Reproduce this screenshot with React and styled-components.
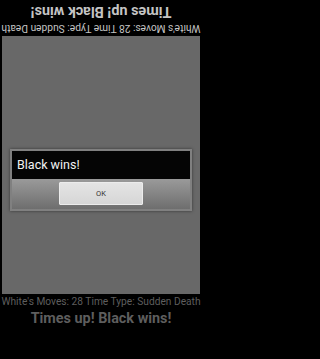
import styled, { createGlobalStyle } from 'styled-components';

const GlobalStyle = createGlobalStyle`
  html, body {
    margin: 0;
    padding: 0;
    background: #000;
    font-family: Roboto, 'Liberation Sans', sans-serif;
  }
`;

// Page layout

const Frame = styled.div`
  position: relative;
  width: 202px;
  height: 359px;
  overflow: hidden;
`;

const Screen = styled.div`
  display: flex;
  flex-direction: column;
  height: 100%;
  background: #000;
`;

const Status = styled.div`
  display: flex;
  flex-direction: column;
  align-items: center;
  height: 36px;
  box-sizing: border-box;
  padding-top: 1px;
  transform: ${(props) => (props.flipped ? 'rotate(180deg)' : 'none')};
  color: ${(props) => props.tone};
`;

const Moves = styled.div`
  font-size: 10.2px;
  line-height: 14px;
  white-space: nowrap;
`;

const Result = styled.div`
  font-size: 14.4px;
  font-weight: bold;
  line-height: 20px;
  white-space: nowrap;
`;

const Board = styled.div`
  height: 258px;
  margin: 0 2px;
  background-color: #686868;
`;

const Filler = styled.div`
  flex: 1;
`;

// Dialog styles

const Overlay = styled.div`
  position: absolute;
  inset: 0;
  display: flex;
  align-items: center;
  justify-content: center;
`;

const Dialog = styled.div`
  width: 182px;
  border: 2px solid #808080;
  box-sizing: border-box;
  background: #5c5c5c;
  box-shadow: 0 0 3px rgba(0, 0, 0, 0.5);
`;

const Title = styled.div`
  height: 28px;
  display: flex;
  align-items: center;
  padding-left: 5px;
  background: #050505;
  color: #f2f2f2;
  font-size: 12.5px;
`;

const ButtonBar = styled.div`
  display: flex;
  justify-content: center;
  padding: 3px 0 4px;
  background: linear-gradient(#9a9a9a, #6e6e6e);
`;

const OkButton = styled.button`
  width: 84px;
  height: 23px;
  padding: 0;
  border: 1px solid #ececec;
  border-radius: 1px;
  background: linear-gradient(#e4e4e4, #d6d6d6);
  color: #333;
  font-family: inherit;
  font-size: 7.5px;
`;

function StatusBlock({ flipped, tone }) {
  return (
    <Status flipped={flipped} tone={tone}>
      <Moves>White&apos;s Moves: 28 Time Type: Sudden Death</Moves>
      <Result>Times up! Black wins!</Result>
    </Status>
  );
}

export default function App() {
  return (
    <>
      <GlobalStyle />
      <Frame>
        <Screen>
          <StatusBlock flipped tone="#c4c4c4" />
          <Board />
          <StatusBlock tone="#5e5e5e" />
          <Filler />
        </Screen>
        <Overlay>
          <Dialog>
            <Title>Black wins!</Title>
            <ButtonBar>
              <OkButton>OK</OkButton>
            </ButtonBar>
          </Dialog>
        </Overlay>
      </Frame>
    </>
  );
}
